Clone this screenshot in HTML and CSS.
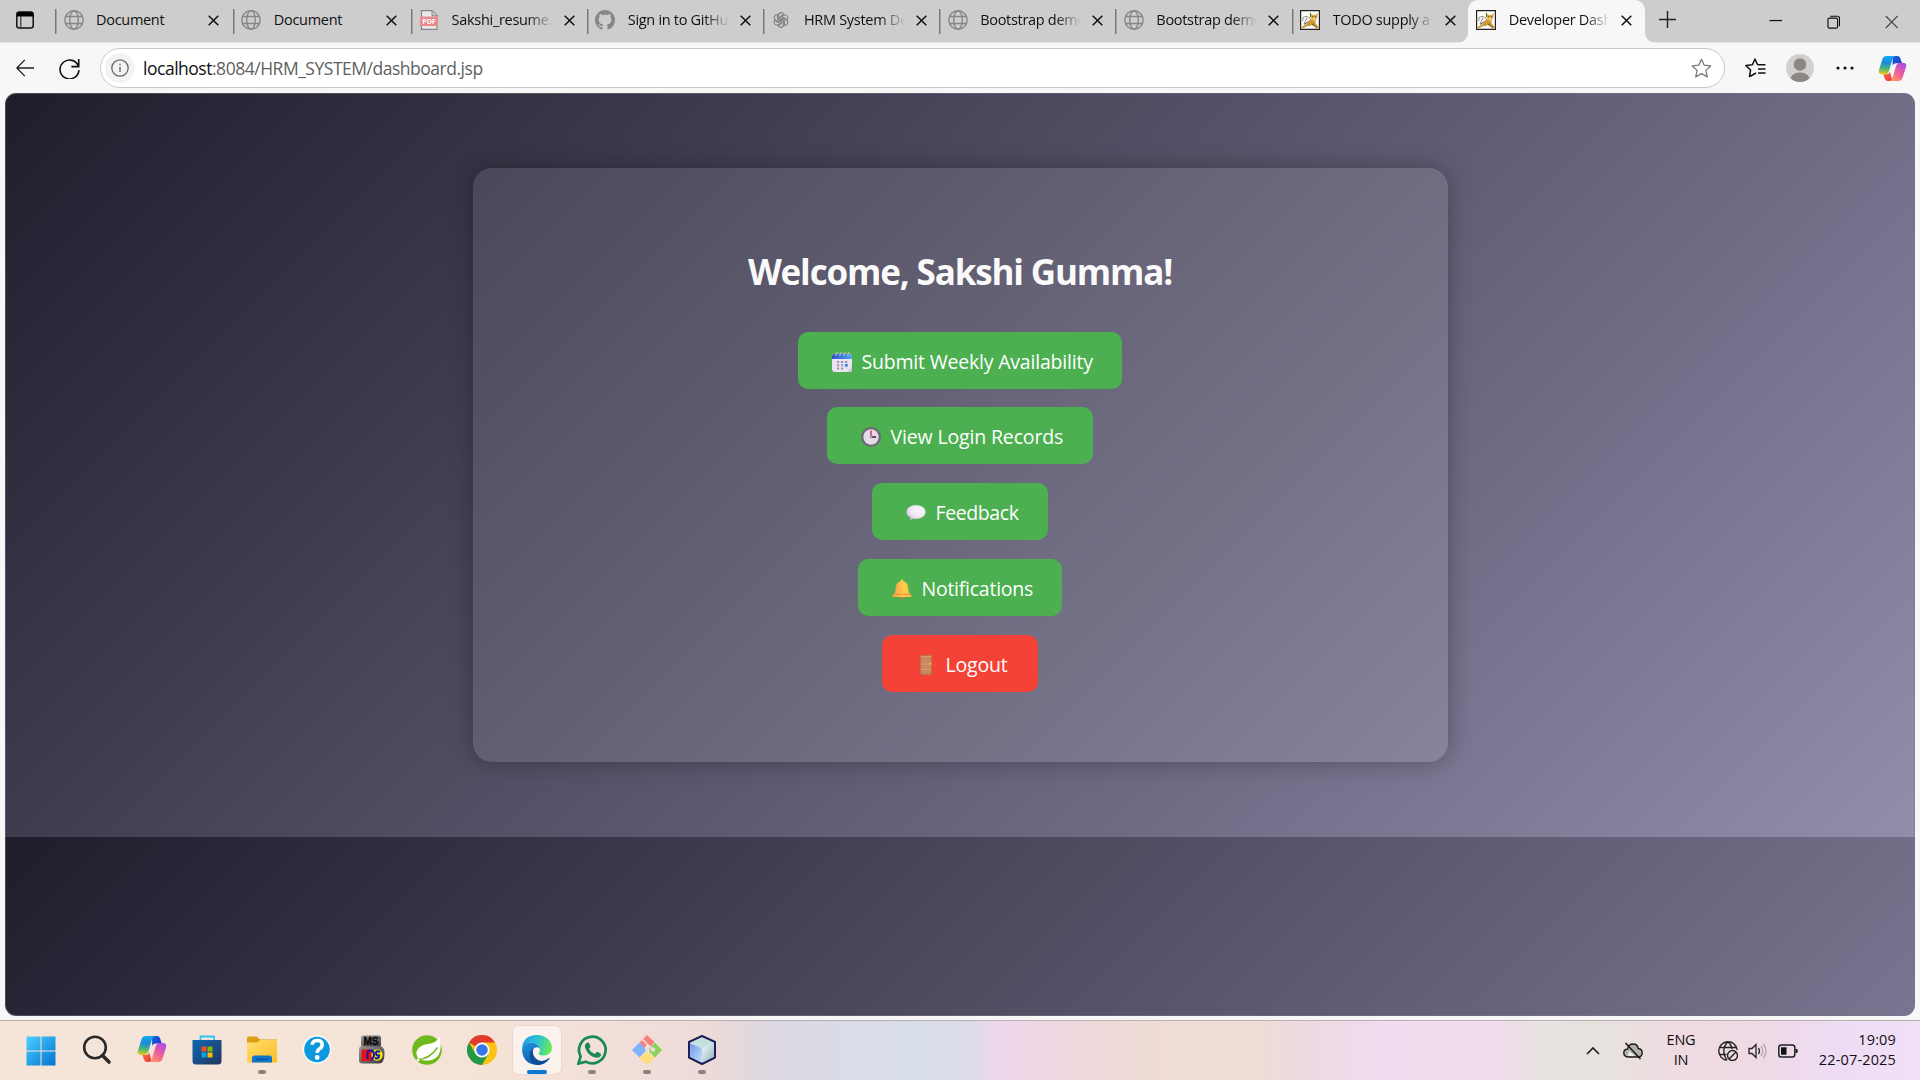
FILE: index.html
```html
<!DOCTYPE html>
<html lang="en">
<head>
<meta charset="utf-8">
<title>Developer Dashboard</title>
<link rel="stylesheet" href="styles.css">
</head>
<body>
<svg class="defs" width="0" height="0" aria-hidden="true">
  <defs>
    <linearGradient id="cpA" x1="0.2" y1="0" x2="0.1" y2="1"><stop offset="0" stop-color="#12a5f0"/><stop offset=".35" stop-color="#1a8be0"/><stop offset=".65" stop-color="#45b37a"/><stop offset="1" stop-color="#f3cf1a"/></linearGradient>
    <linearGradient id="cpB" x1="0.9" y1="0" x2="0.2" y2="1"><stop offset="0" stop-color="#a44df0"/><stop offset=".5" stop-color="#ee5aa0"/><stop offset="1" stop-color="#ff9a5a"/></linearGradient>
    <linearGradient id="cpC" x1="0" y1="0" x2="1" y2="1"><stop offset="0" stop-color="#1668e0"/><stop offset="1" stop-color="#1b34c4"/></linearGradient>
    <linearGradient id="cpD" x1="0" y1="0" x2="1" y2="1"><stop offset="0" stop-color="#f8742c"/><stop offset="1" stop-color="#e8344e"/></linearGradient>
    <linearGradient id="win" gradientUnits="userSpaceOnUse" x1="0" y1="0" x2="30" y2="30"><stop offset="0" stop-color="#4fd2ff"/><stop offset="1" stop-color="#0070d0"/></linearGradient>
    <linearGradient id="store" x1="0" y1="0" x2="1" y2="1"><stop offset="0" stop-color="#0f68b4"/><stop offset="1" stop-color="#21365e"/></linearGradient>
    <linearGradient id="fold" x1="0" y1="0" x2="1" y2="1"><stop offset="0" stop-color="#ffdf72"/><stop offset="1" stop-color="#fcbd24"/></linearGradient>
    <linearGradient id="edgeA" x1="0" y1="0.3" x2="1" y2="0.5"><stop offset="0" stop-color="#1d9fe0"/><stop offset=".5" stop-color="#2cc3d4"/><stop offset="1" stop-color="#6bea50"/></linearGradient>
    <linearGradient id="edgeB" x1="0" y1="0" x2="0.5" y2="1"><stop offset="0" stop-color="#1f98e0"/><stop offset="1" stop-color="#0e58a8"/></linearGradient>
    <linearGradient id="nbA" x1="0" y1="0" x2="1" y2="1"><stop offset="0" stop-color="#6f98e8"/><stop offset="1" stop-color="#c3dcfa"/></linearGradient>
    <linearGradient id="nbB" x1="0" y1="0" x2="1" y2="1"><stop offset="0" stop-color="#f2fafc"/><stop offset="1" stop-color="#8fb0bc"/></linearGradient>
    <linearGradient id="bell" x1="0" y1="0" x2="1" y2="0"><stop offset="0" stop-color="#f59b45"/><stop offset=".6" stop-color="#ffd04a"/><stop offset="1" stop-color="#fbb143"/></linearGradient>
    <linearGradient id="cal" x1="0" y1="0" x2="1" y2="0"><stop offset="0" stop-color="#2f50c8"/><stop offset="1" stop-color="#4ba8ee"/></linearGradient>
    <radialGradient id="bub" cx=".6" cy=".35" r=".7"><stop offset="0" stop-color="#fbf6fc"/><stop offset=".6" stop-color="#efe7f4"/><stop offset="1" stop-color="#bfaed6"/></radialGradient>
    <linearGradient id="tin" x1="0" y1="0" x2="1" y2="1"><stop offset="0" stop-color="#9a9a9a"/><stop offset="1" stop-color="#3a3a3a"/></linearGradient>
    <symbol id="globe" viewBox="0 0 20 20"><g fill="none" stroke="#85868a" stroke-width="1.4"><circle cx="10" cy="10" r="9.2"/><ellipse cx="10" cy="10" rx="4.3" ry="9.2"/><path d="M1.6 6.5h16.8M1.6 13.5h16.8"/></g></symbol>
    <symbol id="close" viewBox="0 0 11 11"><path d="M.7.7l9.6 9.6M10.3.7L.7 10.3" stroke="#111" stroke-width="1.5" fill="none"/></symbol>
    <symbol id="tomcat" viewBox="0 0 20 20"><path d="M.6.6h18.800v18.800H.6z" fill="#fdfdfb" stroke="#222" stroke-width="1.200"/><path d="M3 11Q2 6 6 6.500q3 .5 5 3M7 8l-3 6M9 16l3-2" fill="none" stroke="#8d8d88" stroke-width="1"/><path d="M10.500 9l2.500 1.500h3l-1 2 3.500 4.500-.5 1.500-4-2.500-2.500-1-4 1-5 2.500-1-1.500 4.500-2.500z" fill="#cf962f"/><path d="M10.300 3l1.700 1.800h3.500L18 3.200l-.8 4.600-1.700 2.700h-3L10.800 8z" fill="#dfae3f"/><path d="M12.800 8.300h2.600l-1.200 1.700z" fill="#f7f1dd"/><path d="M12.200 6.500h1.200M15 6.500h1.200M4 14.500l4.500-3M12 14l5 4M10.300 3l.4 4" stroke="#54482c" stroke-width=".9" fill="none"/></symbol>
    <symbol id="copilot" viewBox="0 0 30 28"><path d="M15 1h5q2.300 0 3.100 2.400l1.700 5.200h-6q-2.600 0-3.600 2.400z" fill="url(#cpC)"/><path d="M9 1h9q-2.200.5-3.100 3.500l-3.700 12.600Q10.200 20 7.500 20H4.200Q-.2 20 1 15.500L4.500 4.300Q5.600 1 9 1z" fill="url(#cpA)"/><path d="M15 27h-5q-2.300 0-3-2.400L5.500 20H9q2.500 0 3.300-2.600z" fill="url(#cpD)"/><path d="M21 27h-9q2.200-.5 3.100-3.500l3.700-12.600Q19.800 8 22.500 8h3.300q4.400 0 3.200 4.500l-3.500 11.200Q24.400 27 21 27z" fill="url(#cpB)"/></symbol>
  </defs>
</svg>

<header class="tabstrip">
  <div class="tab-actions"><svg width="18" height="18" viewBox="0 0 18 18"><rect x=".8" y="1" width="16.400" height="16" rx="2.500" fill="none" stroke="#111" stroke-width="1.500"/><path d="M1 2.500Q1 1 3 1h12q2 0 2 1.500V5.500H1z" fill="#000"/><path d="M4.800 5v12" stroke="#333" stroke-width="1.200"/></svg></div>
  <div class="tab wide"><svg class="fav"><use href="#globe"/></svg><span class="label">Document</span><svg class="x"><use href="#close"/></svg></div>
  <div class="tab wide"><svg class="fav"><use href="#globe"/></svg><span class="label">Document</span><svg class="x"><use href="#close"/></svg></div>
  <div class="tab"><svg class="fav" viewBox="0 0 20 20"><path d="M2.500.6h10.700L18 5.400V19.400H2.500z" fill="#e9e9e9" stroke="#85868a" stroke-width="1.200"/><path d="M13 .8v5h5" fill="#ccc" stroke="#85868a"/><path d="M1 6.500h18v9.500H1z" fill="#ea8a8c"/><text x="10" y="13.800" text-anchor="middle" class="pdf">PDF</text></svg><span class="label fade">Sakshi_resume.pdf</span><svg class="x"><use href="#close"/></svg></div>
  <div class="tab"><svg class="fav" viewBox="0 0 16 16"><path fill="#85868a" d="M8 0C3.580 0 0 3.580 0 8c0 3.540 2.290 6.530 5.470 7.590.4.070.55-.17.55-.38v-1.490c-2.010.37-2.530-.49-2.690-.94-.09-.23-.48-.94-.82-1.130-.28-.15-.68-.52-.01-.53.63-.01 1.080.58 1.230.82.72 1.210 1.870.87 2.330.66.070-.52.280-.87.510-1.070-1.780-.2-3.640-.89-3.640-3.950 0-.87.310-1.590.82-2.150-.08-.2-.36-1.020.08-2.120 0 0 .67-.21 2.200.82.64-.18 1.320-.27 2-.27s1.360.09 2 .27c1.530-1.040 2.200-.82 2.200-.82.44 1.100.16 1.920.08 2.120.51.560.82 1.270.82 2.150 0 3.070-1.870 3.750-3.650 3.950.29.25.54.73.54 1.480v2.190c0 .21.150.46.550.38A8.010 8.010 0 0 0 16 8c0-4.420-3.580-8-8-8z"/></svg><span class="label fade">Sign in to GitHub</span><svg class="x"><use href="#close"/></svg></div>
  <div class="tab"><svg class="fav" viewBox="-1 -1 22 22"><g fill="none" stroke="#85868a" stroke-width="1.300"><path id="petal" d="M7 10.200V5.200Q7.200 2.100 10 1.800q2.300 0 3.300 1.900L9 6.200v4.900"/><use href="#petal" transform="rotate(60 10 10)"/><use href="#petal" transform="rotate(120 10 10)"/><use href="#petal" transform="rotate(180 10 10)"/><use href="#petal" transform="rotate(240 10 10)"/><use href="#petal" transform="rotate(300 10 10)"/></g></svg><span class="label fade">HRM System Design</span><svg class="x"><use href="#close"/></svg></div>
  <div class="tab"><svg class="fav"><use href="#globe"/></svg><span class="label fade">Bootstrap demo</span><svg class="x"><use href="#close"/></svg></div>
  <div class="tab"><svg class="fav"><use href="#globe"/></svg><span class="label fade">Bootstrap demo</span><svg class="x"><use href="#close"/></svg></div>
  <div class="tab"><svg class="fav"><use href="#tomcat"/></svg><span class="label fade">TODO supply a title</span><svg class="x"><use href="#close"/></svg></div>
  <div class="tab active"><svg class="fav"><use href="#tomcat"/></svg><span class="label fade">Developer Dashboard</span><svg class="x"><use href="#close"/></svg></div>
  <svg class="plus" viewBox="0 0 18 18"><path d="M9 0v18M0 9h18" stroke="#222" stroke-width="1.500"/></svg>
  <div class="winctl">
    <svg viewBox="0 0 14 14"><path d="M.5 5.500h13" stroke="#111" stroke-width="1.300"/></svg>
    <svg viewBox="0 0 14 14"><g fill="none" stroke="#111" stroke-width="1.200"><rect x="1" y="3" width="10" height="10.400" rx="1.500"/><path d="M3.500 1H11q2 0 2 2v8.500"/></g></svg>
    <svg viewBox="0 0 14 14"><path d="M.8.8l12.400 12.400M13.200.8L.8 13.200" stroke="#444" stroke-width="1.200"/></svg>
  </div>
</header>

<nav class="toolbar">
  <svg class="back" viewBox="0 0 20 20"><path d="M20 10H1.200M9.800 1L1 10l8.800 9" fill="none" stroke="#222" stroke-width="1.500"/></svg>
  <svg class="reload" viewBox="0 0 20 20"><path d="M18.600 8.200A9 9 0 1 0 19 11.500M18.800 1v7.200h-7" fill="none" stroke="#111" stroke-width="1.500"/></svg>
  <div class="address">
    <span class="info"><svg viewBox="0 0 18 18"><circle cx="9" cy="9" r="8.200" fill="none" stroke="#666" stroke-width="1.300"/><path d="M9 8v5M9 4.800v1.500" stroke="#666" stroke-width="1.400"/></svg></span>
    <span class="url"><b>localhost</b>:8084/HRM_SYSTEM/dashboard.jsp</span>
    <svg class="star" viewBox="0 0 20 20"><path d="M10 1.200l2.600 5.700 6.200.7-4.600 4.200 1.300 6.200L10 14.900 4.500 18l1.300-6.200L1.200 7.600l6.200-.7z" fill="none" stroke="#777" stroke-width="1.200" stroke-linejoin="round"/></svg>
  </div>
  <div class="tools">
    <svg class="favs" viewBox="0 0 21 20"><path d="M5.800 18L11 15M12.500 6.800L10 1 7.400 6.800.9 7.600l4.700 4.400L4.500 18.500l1.800-.9M12.500 6.800h8M13 11h7.500M13 15h7.500" fill="none" stroke="#111" stroke-width="1.500" stroke-linejoin="round"/></svg>
    <svg class="avatar" viewBox="0 0 28 28"><clipPath id="av"><circle cx="14" cy="14" r="14"/></clipPath><g clip-path="url(#av)"><path d="M0 0h28v28H0z" fill="#d2d0cd"/><circle cx="14" cy="10.500" r="6.200" fill="#8a8784"/><path d="M4 28q0-9.500 10-9.500T24 28z" fill="#8a8784"/></g></svg>
    <svg class="dots" viewBox="0 0 18 4"><g fill="#111"><circle cx="2" cy="2" r="1.600"/><circle cx="9" cy="2" r="1.600"/><circle cx="16" cy="2" r="1.600"/></g></svg>
    <svg class="cop"><use href="#copilot"/></svg>
  </div>
</nav>

<div class="viewport">
  <div class="page">
    <main class="card">
      <h1>Welcome, Sakshi Gumma!</h1>
      <a class="btn b1"><svg viewBox="0 0 20 20"><rect x="0" y="2" width="20" height="18" rx="3" fill="#ebe3f3"/><path d="M0 7V5q0-3 3-3h14q3 0 3 3v2z" fill="url(#cal)"/><path d="M15 20l5-6v3q0 3-3 3z" fill="#d3c8e2"/><path d="M5 9h2.200v2H5zM9 9h2.200v2H9zM13 9h2.200v2H13zM5 12.300h2.200v2H5zM9 12.300h2.200v2H9zM5 15.600h2.200v2H5zM9 15.600h2.200v2H9z" fill="#9b93aa"/><path d="M13 12h2.800v2.700H13z" fill="#3187dc"/><path d="M4 4V1.500q1-1.500 2 0M8 4V1.500q1-1.500 2 0M12 4V1.500q1-1.500 2 0M16 4V1.500q1-1.500 2 0" stroke="#bfbfd2" stroke-width="1.100" fill="none"/></svg><span>Submit Weekly Availability</span></a>
      <a class="btn b2"><svg viewBox="0 0 20 20"><circle cx="10" cy="10" r="10" fill="#70687a"/><circle cx="10" cy="10" r="7.700" fill="#e2dce6"/><path d="M10 3.500V10" stroke="#e0446c" stroke-width="1.700"/><path d="M10 10h5" stroke="#40354d" stroke-width="1.700"/><circle cx="10" cy="10" r="1.300" fill="#a59bb0"/></svg><span>View Login Records</span></a>
      <a class="btn b3"><svg viewBox="0 0 20 20"><path d="M10 2.200c5.500 0 9.600 2.900 9.600 6.800S15.500 16 10 16c-1 0-2 0-2.800-.3L4 17.200l.4-2.700C2 13.300.4 11.400.4 9 .4 5.100 4.500 2.200 10 2.200z" fill="url(#bub)"/></svg><span>Feedback</span></a>
      <a class="btn b4"><svg viewBox="0 0 20 20"><circle cx="10" cy="18" r="2" fill="#e2703f"/><path d="M8.800.8q1.200-1.200 2.400 0v1.400q4.600 1 5 6l.6 5.300 2.700 3q.5 1.500-1 1.500h-17q-1.500 0-1-1.500l2.700-3 .6-5.300q.4-5 5-6z" fill="url(#bell)"/><path d="M2 15.300h16.200" stroke="#ef8a48" stroke-width="1"/></svg><span>Notifications</span></a>
      <a class="btn b5"><svg viewBox="0 0 20 20"><path d="M4 0h12v20H4z" fill="#b87350"/><path d="M5.200 1.200h9.600v17.600H5.200z" fill="#c98660"/><path d="M5 9h10M5 14.500h10M5 1.500h10" stroke="#dd9c62" stroke-width="1"/><circle cx="14.300" cy="8.800" r="1.100" fill="#ffb52e"/></svg><span>Logout</span></a>
    </main>
  </div>
</div>

<footer class="taskbar">
  <div class="apps">
    <div class="app start"><svg viewBox="0 0 30 30"><path d="M.5.500h14v14H.5zM15.500.5h14v14h-14zM.5 15.500h14v14H.5zM15.500 15.500h14v14h-14z" fill="url(#win)"/></svg></div>
    <div class="app"><svg viewBox="0 0 30 30"><circle cx="13" cy="12.500" r="10.800" fill="none" stroke="#2b2927" stroke-width="2.600"/><path d="M20.500 20.500l6.500 6.500" stroke="#2b2927" stroke-width="3.600" stroke-linecap="round"/></svg></div>
    <div class="app"><svg viewBox="0 0 30 30"><use href="#copilot" width="30" height="28"/></svg></div>
    <div class="app"><svg viewBox="0 0 30 30"><path d="M8.500 6.500V1.500h13.500v5" fill="none" stroke="#2fc3f2" stroke-width="1.800"/><path d="M.5 5h29v21q0 3.500-3.500 3.500H4Q.5 29.500.5 26z" fill="url(#store)"/><path d="M9.500 11.500h5v5h-5z" fill="#f25022"/><path d="M15.500 11.500h5v5h-5z" fill="#7fba00"/><path d="M9.500 17.500h5v5h-5z" fill="#00a4ef"/><path d="M15.500 17.500h5v5h-5z" fill="#ffb900"/></svg></div>
    <div class="app run"><svg viewBox="0 0 30 30"><path d="M0 3q0-1.500 1.500-1.500h8L13 4.500h17V10H0z" fill="#dda010"/><path d="M0 7.500h10l3.500-2.500H30v22.500H0z" fill="url(#fold)"/><path d="M5 27.500V23q0-2.500 2.500-2.500h15Q25 20.500 25 23v4.500z" fill="#0f74cc"/><path d="M9 24.200h12" stroke="#0a4c94" stroke-width="1.200"/></svg></div>
    <div class="app"><svg viewBox="0 0 30 30"><circle cx="15" cy="14.500" r="14.200" fill="#f8fbfd"/><circle cx="15" cy="14.500" r="12.800" fill="#0c98dc"/><path d="M10 9.800q.7-4.300 5.200-4.300 5 0 5 4 0 2.700-2.600 4.200-2.400 1.400-2.400 4.200" fill="none" stroke="#fff" stroke-width="3.600"/><circle cx="15.200" cy="22.500" r="2.400" fill="#fff"/></svg></div>
    <div class="app"><svg viewBox="0 0 30 30"><rect x="4" y=".5" width="20" height="12" rx="2.500" fill="url(#tin)"/><text x="14" y="9.800" text-anchor="middle" class="ms">MS</text><path d="M4.500 11.500h20q3 1.500 3 7 0 10-5.500 10H5q-3 0-3-3V14.500q0-3 2.500-3z" fill="url(#tin)"/><path d="M4.500 14.500h8q4 0 4 5.500t-4 6h-8z" fill="#e81010"/><circle cx="20" cy="20" r="5.700" fill="#f4e800"/><path d="M10.500 24v-6q0-3 3.500-2.500 3 .5 3 4t-3 5.500M23 17q-4-2-4 1t3 2.500q0 4-4 2.500" fill="none" stroke="#1418a8" stroke-width="2"/></svg></div>
    <div class="app"><svg viewBox="0 0 30 30"><circle cx="15" cy="15" r="14.800" fill="#6fb81e"/><path d="M27.500 1.500q5.500 24.500-14.500 24-3 0-5.500-1-4.500-4-2.500-9 2.500-5.500 11-6.500 8-.5 11.500-7.500z" fill="#fff"/><path d="M7 24.500q11-1 18.500-12" fill="none" stroke="#6fb81e" stroke-width="1.400"/><circle cx="6" cy="25" r="1.500" fill="#fff"/></svg></div>
    <div class="app"><svg viewBox="0 0 30 30"><circle cx="15" cy="15" r="15" fill="#fbc116"/><path d="M15 15L2 7.500A15 15 0 0 1 28 7.500H15z" fill="#e23b2e"/><path d="M2 7.500A15 15 0 0 0 15 30l6.500-11.200L15 15 8.500 18.800z" fill="#229a48"/><circle cx="15" cy="15" r="7.500" fill="#fff"/><circle cx="15" cy="15" r="5.800" fill="#3578e5"/></svg></div>
    <div class="app run current"><svg viewBox="0 0 30 30"><path d="M0 14Q1 0 15 0 28 .500 30 12q0 8-8 8.500-5 0-5.500-2 2-2 1-5.500Q15.500 7.500 9 7.500 3 8 0 14z" fill="url(#edgeA)"/><path d="M0 15Q1 8 8.500 7.500q7 0 9 5.500-5-2-7 2-2.500 8 6 12 5 2 9-1.500Q21 30 15 30 1 29 0 15z" fill="url(#edgeB)"/><path d="M11.500 13Q9 21 16 25q5.500 2.500 11-2 1-.5.500.800Q23 30 15.500 30 8 28.500 7.500 21q0-5 4-8z" fill="#0c4d98"/></svg></div>
    <div class="app run"><svg viewBox="0 0 30 30"><path d="M1.500 28.500L3.600 21.300A13.300 13.300 0 1 1 8.800 26.600z" fill="none" stroke="#178a56" stroke-width="2.700"/><path d="M10.500 7.500q1.300-.3 1.700.8l1.200 2.900q.2.800-.5 1.500l-1 1.200q2 3.800 6 5.200l1.500-1.800q.6-.6 1.400-.2l2.700 1.300q.9.500.5 1.800-1 2.700-4.300 2.500Q11 21.500 8 12.500q-.5-4 2.500-5z" fill="#178a56"/></svg></div>
    <div class="app run"><svg viewBox="0 0 30 30"><path d="M15 0l7.500 7-3.500 4-4-1.500-3 4L7.500 7.500z" fill="#f98080"/><path d="M7.500 7.500l7 7.500-7 7.500L0 15z" fill="#80b3ff"/><path d="M23 7.500l7 7.500-7 7.500-7.500-7.500z" fill="#87d35c"/><path d="M15 16l7.500 7L15 30l-7.500-7z" fill="#fde07a"/><path d="M10.500 4.500l9.500 9.500M15.500 9v11" stroke="#f1ddd9" stroke-width="1.600"/><circle cx="15.500" cy="15" r="2.200" fill="#f1ddd9"/><circle cx="21" cy="14.500" r="2.200" fill="#f1ddd9"/></svg></div>
    <div class="app run"><svg viewBox="0 0 30 30"><path d="M15 1l13 6v15.500L15 29 2 22.500V7z" fill="#c9dff5" stroke="#1b1f55" stroke-width="2" stroke-linejoin="round"/><path d="M15 2.500l11.500 5L15 12 3.500 7.500z" fill="#c3e2d9"/><path d="M3.200 8.500L14.500 13v14.200L3.200 21.800z" fill="url(#nbA)"/><path d="M15.500 13l11.300-4.500v13.300l-11.300 5.400z" fill="url(#nbB)"/></svg></div>
  </div>
  <div class="tray">
    <svg class="chev" viewBox="0 0 14 8"><path d="M1 7l6-6 6 6" fill="none" stroke="#222" stroke-width="1.700"/></svg>
    <svg class="cloud" viewBox="0 0 20 18"><path d="M5 15q-4.200-.3-4.200-4T4.600 7Q5.500 2 10 2t5.200 4.500q4 .5 4 4.300T15.500 15z" fill="#b4b1af" stroke="#1c1c1c" stroke-width="1.400"/><path d="M6 9l6 5H5z" fill="#eee"/><path d="M2.500 1l15 16" stroke="#111" stroke-width="1.500"/></svg>
    <div class="lang"><span>ENG</span><span>IN</span></div>
    <svg class="net" viewBox="0 0 20 20"><g fill="none" stroke="#222" stroke-width="1.400"><path d="M9 19.300A9.300 9.300 0 1 1 19.300 9M9 19.300Q5.800 15 5.800 10T10 .8Q13.500 4 14.200 8M1.400 6.500h17M1.400 13.500h7"/><circle cx="14.500" cy="14.500" r="5"/><path d="M11 18l7-7"/></g></svg>
    <svg class="vol" viewBox="0 0 20 16"><g fill="none" stroke-width="1.300"><path d="M1 5.500h3L8 1.500v13l-4-4H1z" stroke="#222"/><path d="M10.500 5q2 3 0 6" stroke="#222"/><path d="M13 3q3.500 5 0 10M15.500 1q5 7 0 14" stroke="#b5a2ad"/></g></svg>
    <svg class="bat" viewBox="0 0 20 14"><rect x=".8" y="1" width="16" height="12" rx="2.500" fill="none" stroke="#222" stroke-width="1.500"/><path d="M3 3.300h5.500v7.400H3z" fill="#111"/><path d="M17.500 5h1.200q1.200 0 1.200 2t-1.200 2h-1.200z" fill="#222"/></svg>
    <div class="clock"><span>19:09</span><span>22-07-2025</span></div>
  </div>
</footer>
</body>
</html>
```

FILE: styles.css
```css
* { box-sizing: border-box; }
body {
  margin: 0;
  width: 1920px;
  height: 1080px;
  overflow: hidden;
  display: flex;
  flex-direction: column;
  background: #f7f7f7;
  font-family: "Open Sans", "Noto Sans", sans-serif;
  color: #111;
}
svg { display: block; flex: none; }
.defs { position: absolute; }

/* Tab strip */
.tabstrip {
  height: 43px;
  flex: none;
  display: flex;
  background: #cdcdcd;
  border-bottom: 1px solid #e2e2e2;
}
.tab-actions { width: 55px; padding: 11px 0 0 16px; flex: none; }
.tab {
  width: 176.2px;
  height: 43px;
  flex: none;
  display: flex;
  align-items: flex-start;
  padding-left: 8.500px;
  background: linear-gradient(#777, #777) 0 9px / 1.500px 25px no-repeat;
}
.tab.wide { width: 177.8px; }
.tab.active {
  width: 177px;
  background: #f7f7f7;
  border-radius: 10px 10px 0 0;
  position: relative;
}
.tab.active::before,
.tab.active::after {
  content: "";
  position: absolute;
  bottom: 0;
  width: 10px;
  height: 10px;
}
.tab.active::before { left: -10px; background: radial-gradient(circle at 0 0, transparent 9.500px, #f7f7f7 10px); }
.tab.active::after { right: -10px; background: radial-gradient(circle at 100% 0, transparent 9.500px, #f7f7f7 10px); }
.fav { width: 20px; height: 20px; margin: 10px 12.500px 0 0; }
.pdf { font: bold 7px "Open Sans", sans-serif; fill: #fff; }
.ms { font: bold 10px "Liberation Sans", sans-serif; fill: #080808; stroke: #080808; stroke-width: .4px; }
.label {
  width: 101px;
  height: 40px;
  line-height: 40px;
  font-size: 14.500px;
  letter-spacing: -0.3px;
  white-space: nowrap;
  overflow: hidden;
}
.fade { -webkit-mask-image: linear-gradient(90deg, #000 76px, transparent 101px); mask-image: linear-gradient(90deg, #000 76px, transparent 101px); }
.x { width: 11px; height: 11px; margin: 15px 0 0 11px; }
.plus { width: 17px; height: 17px; margin: 11px 0 0 14px; }
.winctl { margin-left: auto; display: flex; gap: 44.500px; padding: 15px 22px 0 0; }
.winctl svg { width: 13.500px; height: 14px; }

/* Toolbar */
.toolbar {
  height: 50px;
  flex: none;
  display: flex;
  align-items: center;
  padding-left: 15px;
}
.back { width: 20px; height: 18px; margin-right: 24px; }
.reload { width: 21px; height: 21px; margin-right: 20px; }
.address {
  width: 1625px;
  height: 40px;
  border: 1px solid #c9c9c9;
  border-radius: 20px;
  background: #fff;
  display: flex;
  align-items: center;
  padding: 0 12px 0 4px;
}
.info {
  width: 30px;
  height: 30px;
  border-radius: 50%;
  background: #f3f3f3;
  display: flex;
  align-items: center;
  justify-content: center;
  margin-right: 8px;
}
.info svg { width: 18px; height: 18px; }
.url { font-size: 17.500px; letter-spacing: -0.48px; color: #5f5f5f; padding-bottom: 1px; }
.url b { font-weight: 400; color: #111; }
.star { width: 21px; height: 21px; margin-left: auto; }
.tools { display: flex; align-items: center; margin-left: 20px; }
.favs { width: 21px; height: 20px; margin-right: 20px; }
.avatar { width: 28px; height: 28px; margin-right: 22px; }
.dots { width: 18px; height: 4px; margin-right: 24px; }
.cop { width: 29px; height: 27px; }

/* Dashboard page */
.viewport {
  height: 923px;
  flex: none;
  margin: 0 5px;
  border-radius: 11px;
  overflow: hidden;
  border: 1px solid rgba(120, 118, 130, .5);
  background: linear-gradient(135deg, #1f1c2c, #928dab) 0 0 / 100% 744px;
  background-origin: border-box;
}
.page { padding-top: 74px; display: flex; justify-content: center; }
.card {
  width: 975px;
  height: 594px;
  padding-top: 75px;
  border-radius: 19px;
  background: rgba(255, 255, 255, .1);
  box-shadow: 0 0 25px rgba(0, 0, 0, .3);
  display: flex;
  flex-direction: column;
  align-items: center;
}
h1 {
  margin: 0 0 34px;
  height: 55px;
  line-height: 58px;
  font-size: 35px;
  font-weight: 700;
  letter-spacing: -1.15px;
  color: #fafafa;
  white-space: nowrap;
}
.btn {
  height: 57px;
  margin-bottom: 19px;
  border-radius: 10px;
  background: #4caf50;
  color: #fff;
  font-size: 19.500px;
  display: flex;
  align-items: center;
  padding-left: 33px;
  white-space: nowrap;
}
.btn svg { width: 20px; height: 20px; margin: 3px 10px 0 0.5px; }
.btn span { line-height: 57px; padding-top: 1px; }
.b1 { width: 324px; margin-bottom: 18px; letter-spacing: -0.2px; }
.b2 { width: 266px; letter-spacing: -0.15px; }
.b3 { width: 176px; letter-spacing: -0.4px; }
.b4 { width: 204px; letter-spacing: -0.25px; }
.b5 { width: 156px; background: #f44336; letter-spacing: -0.2px; }

/* Taskbar */
.taskbar {
  height: 60px;
  flex: none;
  margin-top: 4px;
  border-top: 1px solid #b9aeaf;
  display: flex;
  justify-content: space-between;
  background: linear-gradient(90deg, #f5e5d8 0, #f5e3d7 480px, #f2ded9 640px, #edd9d8 710px, #dcd8e4 775px, #d8dfe9 915px, #dcdce9 970px, #efd6ec 1000px, #eed8dc 1080px, #efdcd3 1170px, #efdcd5 1250px, #ecdae2 1310px, #f2dcf0 1390px, #f0dcea 1500px, #e7e3e0 1540px, #e6e3df 1600px, #f0dae1 1680px, #efd9e4 1750px, #eddcf4 1840px, #f2e0f7 1920px);
}
.apps { display: flex; padding-left: 14px; }
.app {
  width: 55px;
  height: 59px;
  display: flex;
  flex-direction: column;
  align-items: center;
  padding-top: 14px;
}
.app.start { padding-right: 2px; padding-top: 15px; }
.app svg { width: 30px; height: 30px; }
.run::after { content: ""; width: 8px; height: 4px; border-radius: 2px; margin-top: 5px; background: #8b827e; }
.app.current {
  width: 48px;
  height: 48px;
  margin: 5px 3.500px 0;
  padding-top: 9px;
  border-radius: 6px;
  background: #fbf2ee;
  box-shadow: 0 0 0 1px rgba(225, 205, 195, .5);
}
.current::after { width: 20px; background: #0a78d4; }
.tray { display: flex; align-items: center; padding-right: 24px; font-size: 14.500px; line-height: 20px; }
.chev { width: 14px; height: 8px; margin-right: 23px; }
.cloud { width: 20px; height: 18px; margin-right: 23px; }
.lang { width: 30px; display: flex; flex-direction: column; align-items: center; margin-right: 22px; letter-spacing: -0.2px; padding-bottom: 1px; }
.net { width: 20px; height: 20px; margin-right: 10px; }
.vol { width: 20px; height: 16px; margin-right: 10px; }
.bat { width: 20px; height: 14px; margin-right: 20px; }
.clock { width: 78px; display: flex; flex-direction: column; align-items: flex-end; letter-spacing: 0.15px; white-space: nowrap; padding-bottom: 2px; }
```
